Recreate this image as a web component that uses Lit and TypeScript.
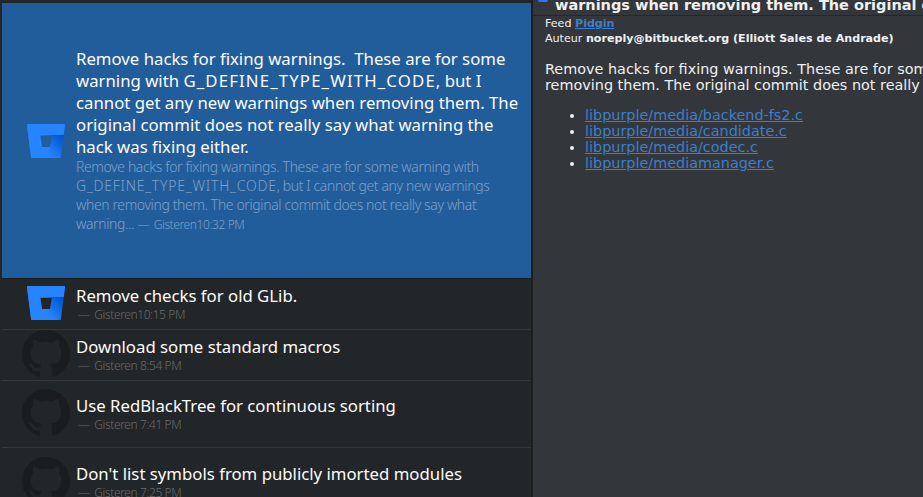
import { LitElement, html, css, svg } from "lit";
import { customElement } from "lit/decorators.js";

const bucket = (id: string) => svg`<svg class="bucket" viewBox="0 0 38 34" width="38" height="34">
  <defs><linearGradient id=${id} gradientUnits="userSpaceOnUse" x1="35" y1="11" x2="19" y2="27">
    <stop offset="0" stop-color="#0052cc"/><stop offset="1" stop-color="#2684ff"/></linearGradient></defs>
  <path fill="url(#${id})" fill-rule="evenodd" d="M1 0H37a1 1 0 0 1 1 1.200L33.900 33a1.200 1.200 0 0 1-1.200 1H5.300a1.200 1.200 0 0 1-1.200-1L0 1.200A1 1 0 0 1 1 0zM13.200 12 15 23H23L24.800 12z"/>
  <path fill="#2684ff" d="M1 0H37a1 1 0 0 1 1 1.200L36.700 11H24.800H13.200L15 23H23L16 34H5.300a1.200 1.200 0 0 1-1.200-1L0 1.200A1 1 0 0 1 1 0z"/>
</svg>`;

const octo = svg`<svg class="octo" viewBox="0 0 16 16" width="48" height="48"><path fill="#1b1c1e" d="M8 0C3.580 0 0 3.580 0 8c0 3.540 2.290 6.530 5.470 7.590.4.070.55-.17.55-.38 0-.19-.01-.82-.01-1.490-2.010.37-2.530-.49-2.690-.94-.09-.23-.48-.94-.82-1.130-.28-.15-.68-.52-.01-.53.63-.01 1.080.58 1.230.82.720 1.210 1.870.87 2.330.66.070-.52.280-.87.510-1.070-1.780-.2-3.640-.89-3.640-3.950 0-.87.310-1.590.820-2.150-.08-.2-.36-1.020.08-2.120 0 0 .67-.21 2.200.82.640-.18 1.320-.27 2-.27s1.360.09 2 .27c1.530-1.040 2.200-.82 2.200-.82.440 1.100.16 1.920.08 2.120.51.560.82 1.270.82 2.150 0 3.070-1.870 3.750-3.650 3.950.29.250.54.730.54 1.480 0 1.070-.01 1.930-.01 2.200 0 .21.150.46.550.38A8.010 8.010 0 0 0 16 8c0-4.420-3.580-8-8-8z"/></svg>`;

interface Row { title: string; time: string; icon: "b" | "g"; h: number; }
const rows: Row[] = [
  { title: "Remove checks for old GLib.", time: "10:15 PM", icon: "b", h: 51 },
  { title: "Download some standard macros", time: "8:54 PM", icon: "g", h: 51 },
  { title: "Use RedBlackTree for continuous sorting", time: "7:41 PM", icon: "g", h: 67 },
  { title: "Don't list symbols from publicly imorted modules", time: "7:25 PM", icon: "g", h: 68 },
];

@customElement("app-root")
export class AppRoot extends LitElement {
  static styles = css`
    :host { display: block; width: 923px; height: 497px; overflow: hidden; background: #232629; }
    .app { display: flex; width: 923px; height: 497px; }
    .list { width: 531px; flex: none; padding: 3px 0 0 2px; box-sizing: border-box; background: #232629; font-family: "Noto Sans", sans-serif; overflow: hidden; }
    .sep { width: 2px; flex: none; background: #1c1e20; }
    .row { display: flex; align-items: center; box-sizing: border-box; border-bottom: 1px solid #33373a; }
    .row .icon { margin-top: -2px; }
    .icon { width: 74px; flex: none; display: flex; justify-content: center; padding-left: 14px; box-sizing: border-box; }
    .row.sel { height: 276px; background: #225d9b; border-bottom-color: #1c1e20; }
    .row.sel .icon { margin-top: 0; }
    .row.sel .title { margin: 1px 0 -1px; }
    .body { flex: 1; min-width: 0; padding-right: 9px; }
    .title { font-size: 16.750px; line-height: 22px; color: #fcfcfc; }
    .title .macro { letter-spacing: 1.150px; }
    .sum { font-size: 14px; line-height: 19px; font-weight: 300; color: #7ea0c8; letter-spacing: -0.38px; padding-right: 5px; }
    .sum .macro { letter-spacing: 0.77px; }
    .dash { margin-right: 2px; }
    .meta { font-size: 12px; line-height: 16px; font-weight: 300; color: #666a68; padding-left: 2px; letter-spacing: -0.4px; }
    .sum .m { font-size: 12px; letter-spacing: -0.4px; }
    .bucket, .octo { display: block; }
    .main { flex: 1; min-width: 0; background: #33373b; font-family: "DejaVu Sans", sans-serif; color: #eff0f1; overflow: hidden; }
    .hdr { height: 15px; display: flex; border-bottom: 1px solid #25282b; overflow: hidden; position: relative; }
    .flag { position: absolute; left: 5px; top: 0; width: 10px; height: 2px; background: #2f74ea; border-radius: 0 0 2px 2px; }
    .h1 { margin-left: 22px; margin-top: -5px; font-size: 14.500px; line-height: 20px; font-weight: 700; white-space: nowrap; }
    .info { padding: 0 0 0 12px; font-size: 11.100px; line-height: 15px; white-space: nowrap; }
    .info div { height: 15px; }
    a { color: #3d7fcb; text-decoration: underline; }
    .info b { color: #eff0f1; }
    .info a { font-weight: 700; }
    p { margin: 15px 0 0 12px; font-size: 14.400px; line-height: 16px; white-space: nowrap; }
    ul { margin: 14px 0 0 12px; padding: 0 0 0 40px; font-size: 14.400px; line-height: 16px; }
  `;
  render() {
    return html`<div class="app">
      <div class="list">
        <div class="row sel">
          <div class="icon">${bucket("a")}</div>
          <div class="body">
            <div class="title">Remove hacks for fixing warnings.&nbsp; These are for some warning with <span class="macro">G_DEFINE_TYPE_WITH_CODE</span>, but I cannot get any new warnings when removing them. The original commit does not really say what warning the hack was fixing either.</div>
            <div class="sum">Remove hacks for fixing warnings. These are for some warning with <span class="macro">G_DEFINE_TYPE_WITH_CODE</span>, but I cannot get any new warnings when removing them. The original commit does not really say what warning... <span class="m"><span class="dash">—</span> Gisteren10:32 PM</span></div>
          </div>
        </div>
        ${rows.map((r, i) => html`<div class="row" style="height:${r.h}px">
          <div class="icon">${r.icon === "b" ? bucket("b" + i) : octo}</div>
          <div class="body">
            <div class="title">${r.title}</div>
            <div class="meta"><span class="dash">—</span> Gisteren${r.icon === "b" ? "" : " "}${r.time}</div>
          </div>
        </div>`)}
      </div>
      <div class="sep"></div>
      <div class="main">
        <div class="hdr"><span class="flag"></span><div class="h1">warnings when removing them. The original commit does not really say</div></div>
        <div class="info">
          <div>Feed <a href="#">Pidgin</a></div>
          <div>Auteur <b>noreply@bitbucket.org (Elliott Sales de Andrade)</b></div>
        </div>
        <p>Remove hacks for fixing warnings. These are for some warning with G_DEFINE_TYPE_WITH_CODE,<br>removing them. The original commit does not really say what warning the hack was fixing</p>
        <ul>
          <li><a href="#">libpurple/media/backend-fs2.c</a></li>
          <li><a href="#">libpurple/media/candidate.c</a></li>
          <li><a href="#">libpurple/media/codec.c</a></li>
          <li><a href="#">libpurple/mediamanager.c</a></li>
        </ul>
      </div>
    </div>`;
  }
}
